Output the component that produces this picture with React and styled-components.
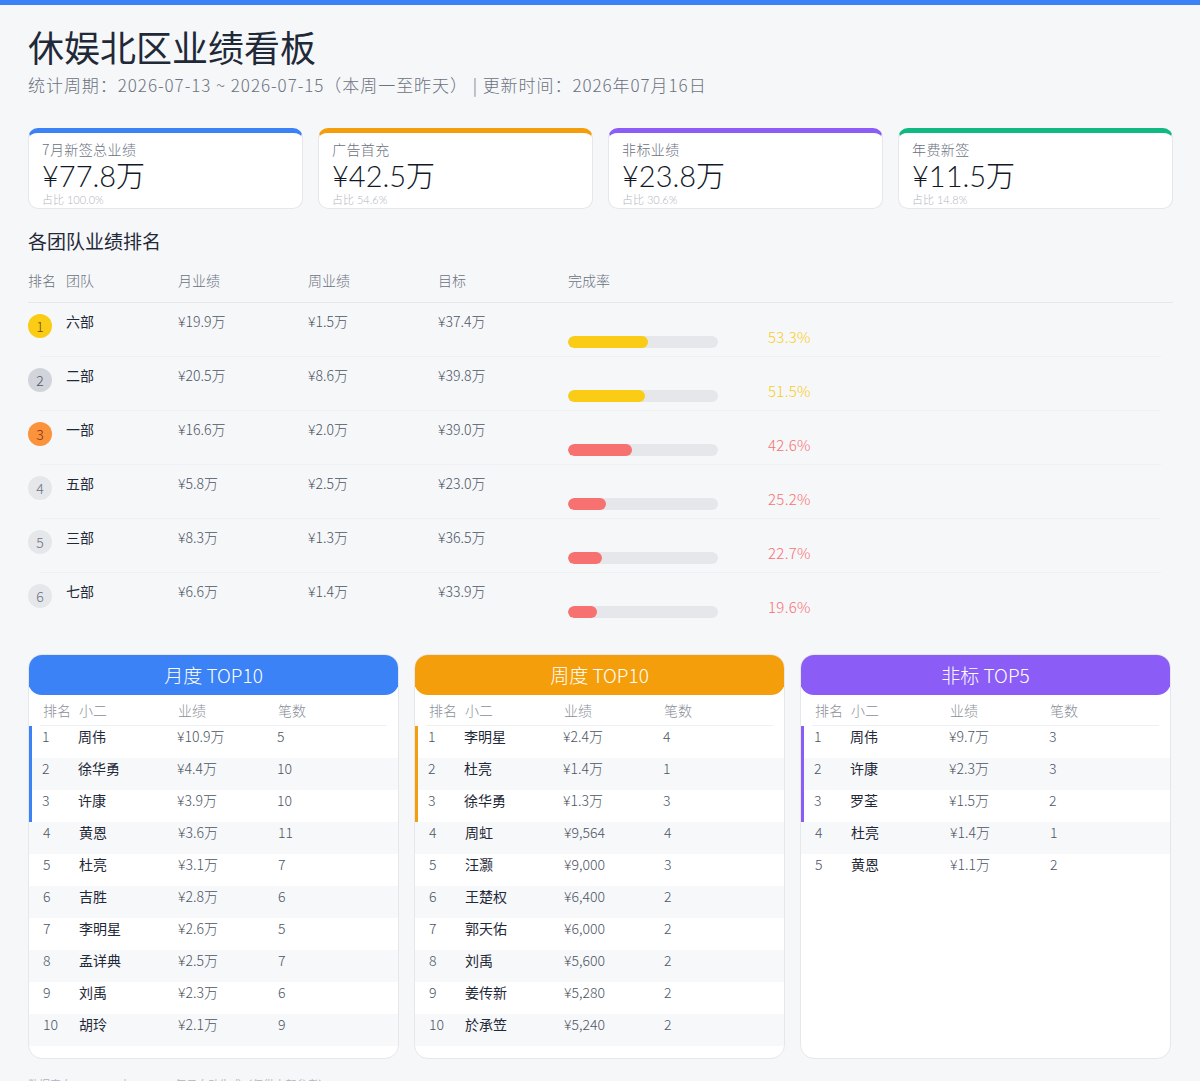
import React from "react";
import styled, { createGlobalStyle } from "styled-components";

const GlobalStyle = createGlobalStyle`
  html, body { margin: 0; padding: 0; background: #f6f7f9; }
  body {
    font-family: "Noto Sans CJK SC", "Noto Sans", sans-serif;
    color: #1f2937;
  }
  * { box-sizing: border-box; }
`;

const TopBar = styled.div`
  height: 5px;
  background: #3b82f6;
`;

const Page = styled.div`
  padding: 19px 27px 0 28px;
`;

const Title = styled.h1`
  margin: 0;
  font-size: 36px;
  line-height: 44px;
  font-weight: 400;
  color: #1f2937;
`;

const Sub = styled.div`
  margin-top: 5px;
  font-size: 17px;
  line-height: 24px;
  letter-spacing: 0.95px;
  color: #6b7280;
  font-weight: 300;
`;

const Cards = styled.div`
  margin-top: 31px;
  display: grid;
  grid-template-columns: repeat(4, 275px);
  gap: 15px;
`;

const Card = styled.div`
  height: 81px;
  background: #fff;
  border: 1px solid #e5e7eb;
  border-top: 5px solid ${(p) => p.$color};
  border-radius: 10px;
  padding: 7px 13px 0;
  overflow: hidden;
`;

const CardLabel = styled.div`
  font-size: 14px;
  line-height: 18px;
  letter-spacing: 0.4px;
  color: #6b7280;
  font-weight: 300;
`;

const CardValue = styled.div`
  margin-top: 3px;
  font-family: Lato, "Noto Sans CJK SC", sans-serif;
  font-size: 29px;
  line-height: 30px;
  color: #111827;
  font-weight: 300;
`;

const CardShare = styled.div`
  margin-top: 2px;
  font-family: Lato, "Noto Sans CJK SC", sans-serif;
  font-size: 11px;
  line-height: 13px;
  color: #b0b5bd;
  font-weight: 300;
`;

const SectionTitle = styled.div`
  margin-top: 19px;
  font-size: 19px;
  line-height: 26px;
  color: #1f2937;
`;

const RankGrid = styled.div`
  display: grid;
  grid-template-columns: 38px 112px 130px 130px 130px 200px 1fr;
`;

const RankHead = styled(RankGrid)`
  margin-top: 4px;
  padding: 12px 0;
  border-bottom: 1px solid #e5e7eb;
  font-size: 14px;
  line-height: 20px;
  color: #6b7280;
  font-weight: 300;
`;

const RankRow = styled(RankGrid)`
  position: relative;
  height: 54px;
  font-size: 14px;
  line-height: 20px;
  color: #1f2937;
  &::after {
    content: "";
    position: absolute;
    left: 12px;
    right: 12px;
    bottom: 0;
    height: 1px;
    background: ${(p) => (p.$last ? "transparent" : "#eef0f3")};
  }
`;

const Cell = styled.div`
  padding-top: 8px;
`;

const Badge = styled.div`
  margin-top: 11px;
  width: 24px;
  height: 24px;
  border-radius: 50%;
  background: ${(p) => p.$bg};
  color: ${(p) => p.$fg};
  font-size: 14px;
  font-weight: 300;
  display: flex;
  align-items: center;
  justify-content: center;
`;

const BarTrack = styled.div`
  margin-top: 33px;
  width: 150px;
  height: 12px;
  border-radius: 6px;
  background: #e5e7eb;
  overflow: hidden;
`;

const BarFill = styled.div`
  height: 100%;
  border-radius: 6px;
  background: ${(p) => p.$color};
`;

const Pct = styled.div`
  padding-top: 24px;
  font-size: 15px;
  line-height: 20px;
  font-weight: 300;
  letter-spacing: 0.3px;
  color: ${(p) => p.$color};
`;

const Panels = styled.div`
  margin-top: 27px;
  display: grid;
  grid-template-columns: repeat(3, 371px);
  gap: 15px;
  align-items: stretch;
`;

const Panel = styled.div`
  background: #fff;
  border: 1px solid #e5e7eb;
  border-radius: 14px;
  padding-bottom: 12px;
  overflow: hidden;
`;

const PanelHead = styled.div`
  margin: -1px -1px 0;
  height: 41px;
  border-radius: 14px;
  background: ${(p) => p.$color};
  color: #fff;
  font-size: 19px;
  font-weight: 300;
  display: flex;
  align-items: center;
  justify-content: center;
`;

const PGrid = styled.div`
  display: grid;
  grid-template-columns: 36px 99px 100px 1fr;
`;

const PHead = styled(PGrid)`
  margin: 0 11px;
  padding: 5px 0 5px 3px;
  border-bottom: 1px solid #eef0f3;
  font-size: 14px;
  line-height: 20px;
  color: #8a8f98;
  font-weight: 300;
`;

const PRow = styled(PGrid)`
  height: 32px;
  padding-left: ${(p) => (p.$accent ? "10px" : "14px")};
  border-left: ${(p) => (p.$accent ? `4px solid ${p.$accent}` : "none")};
  margin-left: ${(p) => (p.$accent ? "-1px" : "0")};
  background: ${(p) => (p.$odd ? "#f7f8fa" : "#fff")};
  font-size: 14px;
  line-height: 20px;
  color: #1f2937;
`;

const Num = styled.span`
  color: #4b5563;
  font-weight: 300;
`;

const Footer = styled.div`
  margin-top: 17px;
  font-size: 11px;
  color: #b0b5bd;
  padding-bottom: 10px;
`;

const cards = [
  { label: "7月新签总业绩", value: "¥77.8万", share: "占比 100.0%", color: "#3b82f6" },
  { label: "广告首充", value: "¥42.5万", share: "占比 54.6%", color: "#f59e0b" },
  { label: "非标业绩", value: "¥23.8万", share: "占比 30.6%", color: "#8b5cf6" },
  { label: "年费新签", value: "¥11.5万", share: "占比 14.8%", color: "#10b981" },
];

const teams = [
  ["六部", "¥19.9万", "¥1.5万", "¥37.4万", 53.3],
  ["二部", "¥20.5万", "¥8.6万", "¥39.8万", 51.5],
  ["一部", "¥16.6万", "¥2.0万", "¥39.0万", 42.6],
  ["五部", "¥5.8万", "¥2.5万", "¥23.0万", 25.2],
  ["三部", "¥8.3万", "¥1.3万", "¥36.5万", 22.7],
  ["七部", "¥6.6万", "¥1.4万", "¥33.9万", 19.6],
];

const badgeColors = [
  { bg: "#facc15", fg: "#6b4f00" },
  { bg: "#d1d5db", fg: "#4b5563" },
  { bg: "#fb923c", fg: "#7c2d12" },
];

const panels = [
  {
    title: "月度 TOP10",
    color: "#3b82f6",
    rows: [
      ["周伟", "¥10.9万", 5], ["徐华勇", "¥4.4万", 10], ["许康", "¥3.9万", 10],
      ["黄恩", "¥3.6万", 11], ["杜亮", "¥3.1万", 7], ["吉胜", "¥2.8万", 6],
      ["李明星", "¥2.6万", 5], ["孟详典", "¥2.5万", 7], ["刘禹", "¥2.3万", 6],
      ["胡玲", "¥2.1万", 9],
    ],
  },
  {
    title: "周度 TOP10",
    color: "#f59e0b",
    rows: [
      ["李明星", "¥2.4万", 4], ["杜亮", "¥1.4万", 1], ["徐华勇", "¥1.3万", 3],
      ["周虹", "¥9,564", 4], ["汪灏", "¥9,000", 3], ["王楚权", "¥6,400", 2],
      ["郭天佑", "¥6,000", 2], ["刘禹", "¥5,600", 2], ["姜传新", "¥5,280", 2],
      ["於承笠", "¥5,240", 2],
    ],
  },
  {
    title: "非标 TOP5",
    color: "#8b5cf6",
    rows: [
      ["周伟", "¥9.7万", 3], ["许康", "¥2.3万", 3], ["罗荃", "¥1.5万", 2],
      ["杜亮", "¥1.4万", 1], ["黄恩", "¥1.1万", 2],
    ],
  },
];

export default function App() {
  return (
    <>
      <GlobalStyle />
      <TopBar />
      <Page>
        <Title>休娱北区业绩看板</Title>
        <Sub>统计周期：2026-07-13 ~ 2026-07-15（本周一至昨天） | 更新时间：2026年07月16日</Sub>

        <Cards>
          {cards.map((c) => (
            <Card key={c.label} $color={c.color}>
              <CardLabel>{c.label}</CardLabel>
              <CardValue>{c.value}</CardValue>
              <CardShare>{c.share}</CardShare>
            </Card>
          ))}
        </Cards>

        <SectionTitle>各团队业绩排名</SectionTitle>
        <RankHead>
          <div>排名</div>
          <div>团队</div>
          <div>月业绩</div>
          <div>周业绩</div>
          <div>目标</div>
          <div>完成率</div>
          <div />
        </RankHead>
        {teams.map((t, i) => {
          const bc = badgeColors[i] || { bg: "#e5e7eb", fg: "#6b7280" };
          const col = t[4] >= 50 ? "#facc15" : "#f87171";
          return (
            <RankRow key={t[0]} $last={i === teams.length - 1}>
              <Badge $bg={bc.bg} $fg={bc.fg}>{i + 1}</Badge>
              <Cell>{t[0]}</Cell>
              <Cell><Num>{t[1]}</Num></Cell>
              <Cell><Num>{t[2]}</Num></Cell>
              <Cell><Num>{t[3]}</Num></Cell>
              <div>
                <BarTrack>
                  <BarFill $color={col} style={{ width: `${t[4]}%` }} />
                </BarTrack>
              </div>
              <Pct $color={col}>{t[4]}%</Pct>
            </RankRow>
          );
        })}

        <Panels>
          {panels.map((p) => (
            <Panel key={p.title}>
              <PanelHead $color={p.color}>{p.title}</PanelHead>
              <PHead>
                <div>排名</div>
                <div>小二</div>
                <div>业绩</div>
                <div>笔数</div>
              </PHead>
              {p.rows.map((r, i) => (
                <PRow key={i} $odd={i % 2 === 1} $accent={i < 3 ? p.color : null}>
                  <Num>{i + 1}</Num>
                  <div>{r[0]}</div>
                  <Num>{r[1]}</Num>
                  <Num>{r[2]}</Num>
                </PRow>
              ))}
            </Panel>
          ))}
        </Panels>

        <Footer>数据来自 ODPS · 由 Hermes 每日自动生成（仅供内部参考）</Footer>
      </Page>
    </>
  );
}
